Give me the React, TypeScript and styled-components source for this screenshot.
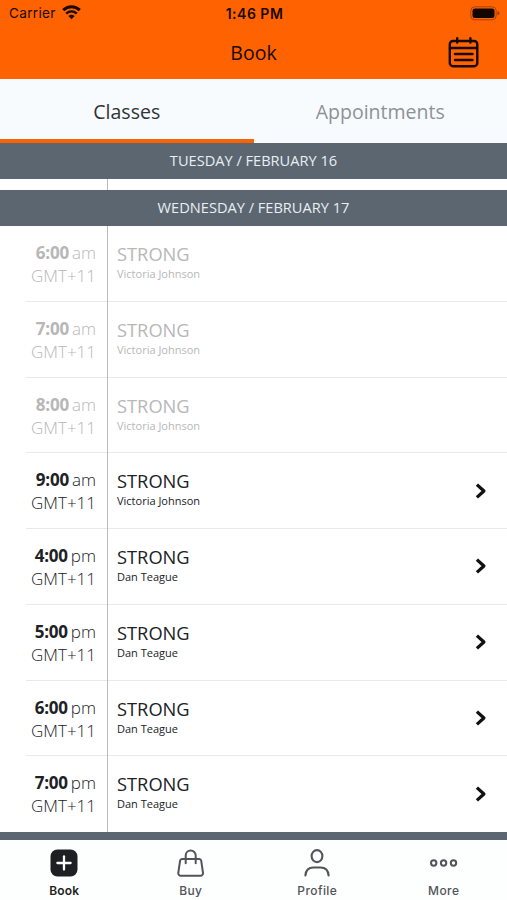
import React from "react";
import styled, { createGlobalStyle } from "styled-components";

const GlobalStyle = createGlobalStyle`
  * { box-sizing: border-box; }
  body { margin: 0; background: #fff; font-family: "Open Sans", "Noto Sans", sans-serif; }
`;

const Screen = styled.div`
  width: 507px;
  height: 900px;
  display: flex;
  flex-direction: column;
  overflow: hidden;
  background: #fff;
`;

const Header = styled.header`
  height: 79px;
  flex: none;
  background: #ff6200;
  color: #180a00;
`;

const StatusBar = styled.div`
  height: 27px;
  display: grid;
  grid-template-columns: 1fr auto 1fr;
  align-items: center;
  padding: 0 7px 0 9px;
  font-family: Inter, sans-serif;
  font-size: 13.5px;
  line-height: 27px;
`;

const Carrier = styled.div`
  display: flex;
  align-items: center;
  gap: 6px;
  letter-spacing: 0.36px;
  svg { margin-top: -2px; }
`;

const Clock = styled.div`
  font-size: 14px;
  line-height: 26px;
  font-weight: 600;
  letter-spacing: 0.5px;
`;

const Battery = styled.div`
  display: flex;
  justify-content: flex-end;
  padding-bottom: 1px;
`;

const TitleBar = styled.div`
  height: 52px;
  display: grid;
  grid-template-columns: 1fr auto 1fr;
  align-items: center;
  padding: 0 28px;
`;

const Title = styled.h1`
  grid-column: 2;
  margin: 0;
  font-size: 19.5px;
  line-height: 52px;
  font-weight: 400;
`;

const CalendarButton = styled.button`
  justify-self: end;
  display: flex;
  padding: 0;
  margin: -2px 0.5px 0 0;
  border: 0;
  background: none;
  color: #180a00;
`;

const Tabs = styled.nav`
  height: 63.5px;
  flex: none;
  display: flex;
  background: #f8fbfe;
`;

const Tab = styled.div<{ $active?: boolean }>`
  flex: 1;
  text-align: center;
  font-size: 19.5px;
  line-height: 65px;
  height: 64px;
  color: ${(p) => (p.$active ? "#303236" : "#8e9196")};
  border-bottom: 4px solid ${(p) => (p.$active ? "#f96306" : "transparent")};
`;

const DayBar = styled.div`
  height: 36.5px;
  flex: none;
  background: #5b6670;
  color: #e9eef4;
  text-align: center;
  font-size: 14.6px;
  line-height: 35px;
`;

const Gap = styled.div`
  height: 10.5px;
  flex: none;
  display: grid;
  grid-template-columns: 107.5px 1fr;
  &::before {
    content: "";
    border-right: 1px solid #b9bbbd;
  }
`;

const Row = styled.div<{ $past?: boolean }>`
  height: 75.75px;
  flex: none;
  display: grid;
  grid-template-columns: 107.5px 1fr 32px;
  color: ${(p) => (p.$past ? "#b7b7b7" : "#202124")};
  background: linear-gradient(#e9e9e9, #e9e9e9) 26px 100% / 481px 1px no-repeat;
  &:last-child { background: none; }
`;

const TimeCell = styled.div`
  border-right: 1px solid #b9bbbd;
  padding: 15px 10.5px 0 0;
  text-align: right;
`;

const Time = styled.div`
  font-size: 17px;
  line-height: 23px;
  font-weight: 300;
  b { font-weight: 700; margin-right: 3px; letter-spacing: -0.2px; }
`;

const Zone = styled.div`
  font-size: 17px;
  line-height: 24px;
  font-weight: 300;
`;

const ClassCell = styled.div`
  padding: 15px 0 0 9.5px;
`;

const ClassName = styled.div`
  font-size: 18.3px;
  line-height: 25px;
`;

const Teacher = styled.div`
  font-size: 11px;
  line-height: 16px;
`;

const Arrow = styled.div`
  display: flex;
  align-items: center;
  color: #111;
  padding-bottom: 1px;
`;

const Schedule = styled.div`
  flex: none;
  display: flex;
  flex-direction: column;
`;

const BottomStrip = styled.div`
  height: 8px;
  flex: none;
  background: #5b6670;
`;

const BottomNav = styled.nav`
  flex: 1;
  display: grid;
  grid-template-columns: repeat(4, 1fr);
  padding-left: 1px;
  background: #fdfefe;
`;

const NavItem = styled.div<{ $active?: boolean }>`
  display: flex;
  flex-direction: column;
  align-items: center;
  padding-top: 9px;
  gap: 5px;
  font-family: Inter, sans-serif;
  font-size: 12px;
  line-height: 18px;
  letter-spacing: ${(p) => (p.$active ? 0.2 : 0.4)}px;
  font-weight: ${(p) => (p.$active ? 600 : 450)};
  color: ${(p) => (p.$active ? "#1d1f22" : "#515459")};
  svg { flex: none; }
`;

const line = { fill: "none", stroke: "currentColor", strokeLinecap: "round", strokeLinejoin: "round" } as const;

const WifiIcon = () => (
  <svg width="19" height="15" viewBox="0 0 19 15" fill="none" stroke="currentColor">
    <path d="M1.2 5.2C6 .6 13 .6 17.8 5.2" strokeWidth="3" />
    <path d="M4.2 8.6c3.1-2.8 7.5-2.8 10.6 0" strokeWidth="2.4" />
    <path d="M6.4 11q3.1-2.5 6.2 0L9.5 14.2Z" fill="currentColor" stroke="none" />
  </svg>
);

const BatteryIcon = () => (
  <svg width="30" height="15" viewBox="0 0 30 15">
    <rect x=".8" y=".8" width="25.4" height="13" rx="4" fill="none" stroke="#a84306" strokeWidth="1" />
    <rect x="2.5" y="2.5" width="22" height="9.6" rx="2.5" fill="#120700" />
    <path d="M27.5 5v4.5q2-.8 2-2.2T27.5 5" fill="#9c3e05" />
  </svg>
);

const CalendarIcon = () => (
  <svg width="31" height="31" viewBox="0 0 31 31" {...line} strokeWidth="2.4">
    <rect x="1.8" y="4" width="27.5" height="25.2" rx="3.2" />
    <path d="M2 11h27M9.2 1.3v4.2M22.4 1.3v4.2M7 17h17.5M7 23h17.5" />
  </svg>
);

const ChevronIcon = () => (
  <svg width="12" height="16" viewBox="0 0 12 16" fill="none" stroke="currentColor" strokeWidth="3.3" strokeLinejoin="round">
    <path d="M1.9 1.6 8.9 8l-7 6.4" />
  </svg>
);

const BookIcon = () => (
  <svg width="28" height="28" viewBox="0 0 28 28">
    <rect x=".5" y=".5" width="27" height="27" rx="7" fill="#1d1f22" />
    <path d="M14 7.4v13.2M7.4 14h13.2" stroke="#fff" strokeWidth="2.3" strokeLinecap="round" />
  </svg>
);

const BagIcon = () => (
  <svg width="28" height="28" viewBox="0 0 28 28" {...line} strokeWidth="2">
    <path d="M5 10h17.2a2 2 0 0 1 2 1.7l1.8 12.1a2.6 2.6 0 0 1-2.6 3H3.9a2.6 2.6 0 0 1-2.6-3l1.8-12.1A2 2 0 0 1 5 10Z" />
    <path d="M8.7 14.2V6.5a5 5 0 0 1 10 0v7.7" />
  </svg>
);

const ProfileIcon = () => (
  <svg width="28" height="28" viewBox="0 0 28 28" {...line} strokeWidth="2.1">
    <ellipse cx="14" cy="7.1" rx="5.4" ry="6" />
    <path d="M2.4 26.5c.4-5.2 3.4-8 8-8h7.2c4.6 0 7.6 2.8 8 8" />
  </svg>
);

const MoreIcon = () => (
  <svg width="28" height="28" viewBox="0 0 28 28" {...line} strokeWidth="2">
    <circle cx="3.7" cy="14" r="2.7" />
    <circle cx="13.6" cy="14" r="2.7" />
    <circle cx="23.5" cy="14" r="2.7" />
  </svg>
);

type Session = { time: string; half: string; teacher: string; past?: boolean };

const sessions: Session[] = [
  { time: "6:00", half: "am", teacher: "Victoria Johnson", past: true },
  { time: "7:00", half: "am", teacher: "Victoria Johnson", past: true },
  { time: "8:00", half: "am", teacher: "Victoria Johnson", past: true },
  { time: "9:00", half: "am", teacher: "Victoria Johnson" },
  { time: "4:00", half: "pm", teacher: "Dan Teague" },
  { time: "5:00", half: "pm", teacher: "Dan Teague" },
  { time: "6:00", half: "pm", teacher: "Dan Teague" },
  { time: "7:00", half: "pm", teacher: "Dan Teague" },
];

export default function App() {
  return (
    <Screen>
      <GlobalStyle />
      <Header>
        <StatusBar>
          <Carrier>Carrier <WifiIcon /></Carrier>
          <Clock>1:46 PM</Clock>
          <Battery><BatteryIcon /></Battery>
        </StatusBar>
        <TitleBar>
          <Title>Book</Title>
          <CalendarButton aria-label="Calendar"><CalendarIcon /></CalendarButton>
        </TitleBar>
      </Header>
      <Tabs>
        <Tab $active>Classes</Tab>
        <Tab>Appointments</Tab>
      </Tabs>
      <DayBar>TUESDAY / FEBRUARY 16</DayBar>
      <Gap />
      <DayBar>WEDNESDAY / FEBRUARY 17</DayBar>
      <Schedule>
        {sessions.map((s) => (
          <Row key={s.time + s.half} $past={s.past}>
            <TimeCell>
              <Time><b>{s.time}</b>{s.half}</Time>
              <Zone>GMT+11</Zone>
            </TimeCell>
            <ClassCell>
              <ClassName>STRONG</ClassName>
              <Teacher>{s.teacher}</Teacher>
            </ClassCell>
            <Arrow>{!s.past && <ChevronIcon />}</Arrow>
          </Row>
        ))}
      </Schedule>
      <BottomStrip />
      <BottomNav>
        <NavItem $active><BookIcon />Book</NavItem>
        <NavItem><BagIcon />Buy</NavItem>
        <NavItem><ProfileIcon />Profile</NavItem>
        <NavItem><MoreIcon />More</NavItem>
      </BottomNav>
    </Screen>
  );
}
